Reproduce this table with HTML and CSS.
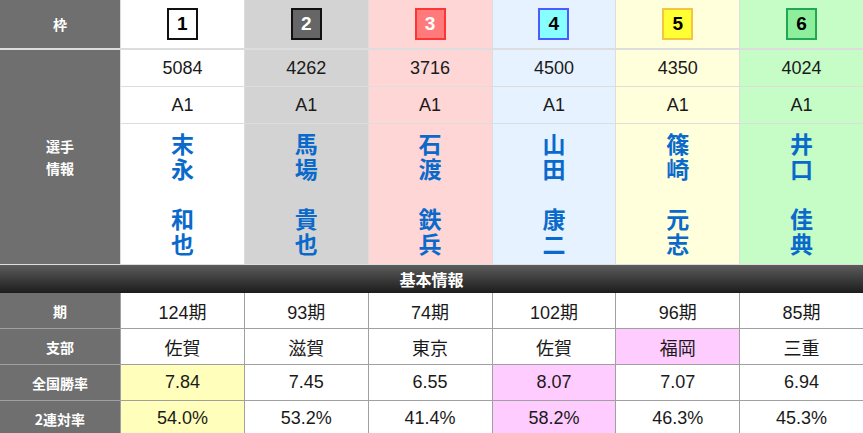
FILE: index.html
```html
<!DOCTYPE html>
<html lang="ja">
<head>
<meta charset="utf-8">
<link rel="stylesheet" href="styles.css">
</head>
<body>
<div class="top">
  <div class="lbl head">枠</div>
  <div class="cell head c1"><span class="badge b1">1</span></div>
  <div class="cell head c2"><span class="badge b2">2</span></div>
  <div class="cell head c3"><span class="badge b3">3</span></div>
  <div class="cell head c4"><span class="badge b4">4</span></div>
  <div class="cell head c5"><span class="badge b5">5</span></div>
  <div class="cell head c6"><span class="badge b6">6</span></div>

  <div class="lbl span3">選手<br>情報</div>
  <div class="cell c1">5084</div>
  <div class="cell c2">4262</div>
  <div class="cell c3">3716</div>
  <div class="cell c4">4500</div>
  <div class="cell c5">4350</div>
  <div class="cell c6">4024</div>

  <div class="cell c1">A1</div>
  <div class="cell c2">A1</div>
  <div class="cell c3">A1</div>
  <div class="cell c4">A1</div>
  <div class="cell c5">A1</div>
  <div class="cell c6">A1</div>

  <div class="cell name c1"><span class="vt">末永　和也</span></div>
  <div class="cell name c2"><span class="vt">馬場　貴也</span></div>
  <div class="cell name c3"><span class="vt">石渡　鉄兵</span></div>
  <div class="cell name c4"><span class="vt">山田　康二</span></div>
  <div class="cell name c5"><span class="vt">篠崎　元志</span></div>
  <div class="cell name c6"><span class="vt">井口　佳典</span></div>
</div>

<div class="bar">基本情報</div>

<div class="bottom">
  <div class="lbl">期</div>
  <div class="cell">124期</div>
  <div class="cell">93期</div>
  <div class="cell">74期</div>
  <div class="cell">102期</div>
  <div class="cell">96期</div>
  <div class="cell">85期</div>

  <div class="lbl">支部</div>
  <div class="cell">佐賀</div>
  <div class="cell">滋賀</div>
  <div class="cell">東京</div>
  <div class="cell">佐賀</div>
  <div class="cell hl-pink">福岡</div>
  <div class="cell">三重</div>

  <div class="lbl">全国勝率</div>
  <div class="cell hl-yellow">7.84</div>
  <div class="cell">7.45</div>
  <div class="cell">6.55</div>
  <div class="cell hl-pink">8.07</div>
  <div class="cell">7.07</div>
  <div class="cell">6.94</div>

  <div class="lbl">2連対率</div>
  <div class="cell hl-yellow">54.0%</div>
  <div class="cell">53.2%</div>
  <div class="cell">41.4%</div>
  <div class="cell hl-pink">58.2%</div>
  <div class="cell">46.3%</div>
  <div class="cell">45.3%</div>
</div>
</body>
</html>
```
FILE: styles.css
```css
html, body {
  margin: 0;
  padding: 0;
  background: #ffffff;
}
body {
  width: 863px;
  font-family: "Liberation Sans", "Noto Sans CJK JP", sans-serif;
  color: #1a1a1a;
}
.top {
  display: grid;
  grid-template-columns: 120px repeat(6, 1fr);
  grid-template-rows: 49px 36px 36px 140px;
  gap: 1px;
  padding-bottom: 1px;
  background: #dddddd;
}
.bottom {
  display: grid;
  grid-template-columns: 120px repeat(6, 1fr);
  grid-template-rows: 35px 35px 35px 35px;
  gap: 1px;
  background: #a0a0a0;
}
.lbl {
  background: #6f6f6f;
  color: #ffffff;
  font-family: "Noto Sans CJK JP", sans-serif;
  font-weight: 700;
  font-size: 14px;
  line-height: 22px;
  display: flex;
  align-items: center;
  justify-content: center;
  text-align: center;
}
.head {
  height: 48px;
  align-self: start;
}
.span3 {
  grid-row: 2 / 5;
  grid-column: 1;
}
.cell {
  display: flex;
  align-items: center;
  justify-content: center;
  font-size: 18px;
  background: #ffffff;
  text-align: center;
}
.c1 { background: #ffffff; }
.c2 { background: #d3d3d3; }
.c3 { background: #ffd6d6; }
.c4 { background: #e6f2ff; }
.c5 { background: #ffffdc; }
.c6 { background: #c6fcc6; }
.name {
  font-family: "Noto Sans CJK JP", sans-serif;
  font-weight: 700;
  font-size: 23px;
  color: #0a6acc;
}
.vt {
  writing-mode: vertical-rl;
  text-orientation: upright;
  letter-spacing: 2px;
  line-height: 30px;
  padding-top: 2px;
}
.badge {
  box-sizing: border-box;
  width: 31px;
  height: 32px;
  border: 2px solid #000;
  display: flex;
  align-items: center;
  justify-content: center;
  font-weight: 700;
  font-size: 19px;
  color: #000;
}
.b1 { background: #ffffff; border-color: #111; }
.b2 { background: #666666; border-color: #111; color: #fff; }
.b3 { background: #ff7b7b; border-color: #ff3535; color: #fff; }
.b4 { background: #88ffff; border-color: #4a5cff; }
.b5 { background: #ffff33; border-color: #f6c444; }
.b6 { background: #8def9c; border-color: #20a855; }
.bar {
  height: 28px;
  background: linear-gradient(#5c5c5c, #1c1c1c);
  color: #ffffff;
  font-family: "Noto Sans CJK JP", sans-serif;
  font-weight: 700;
  font-size: 16px;
  display: flex;
  align-items: center;
  justify-content: center;
}
.hl-yellow { background: #ffffbb; }
.hl-pink { background: #ffccff; }
```
